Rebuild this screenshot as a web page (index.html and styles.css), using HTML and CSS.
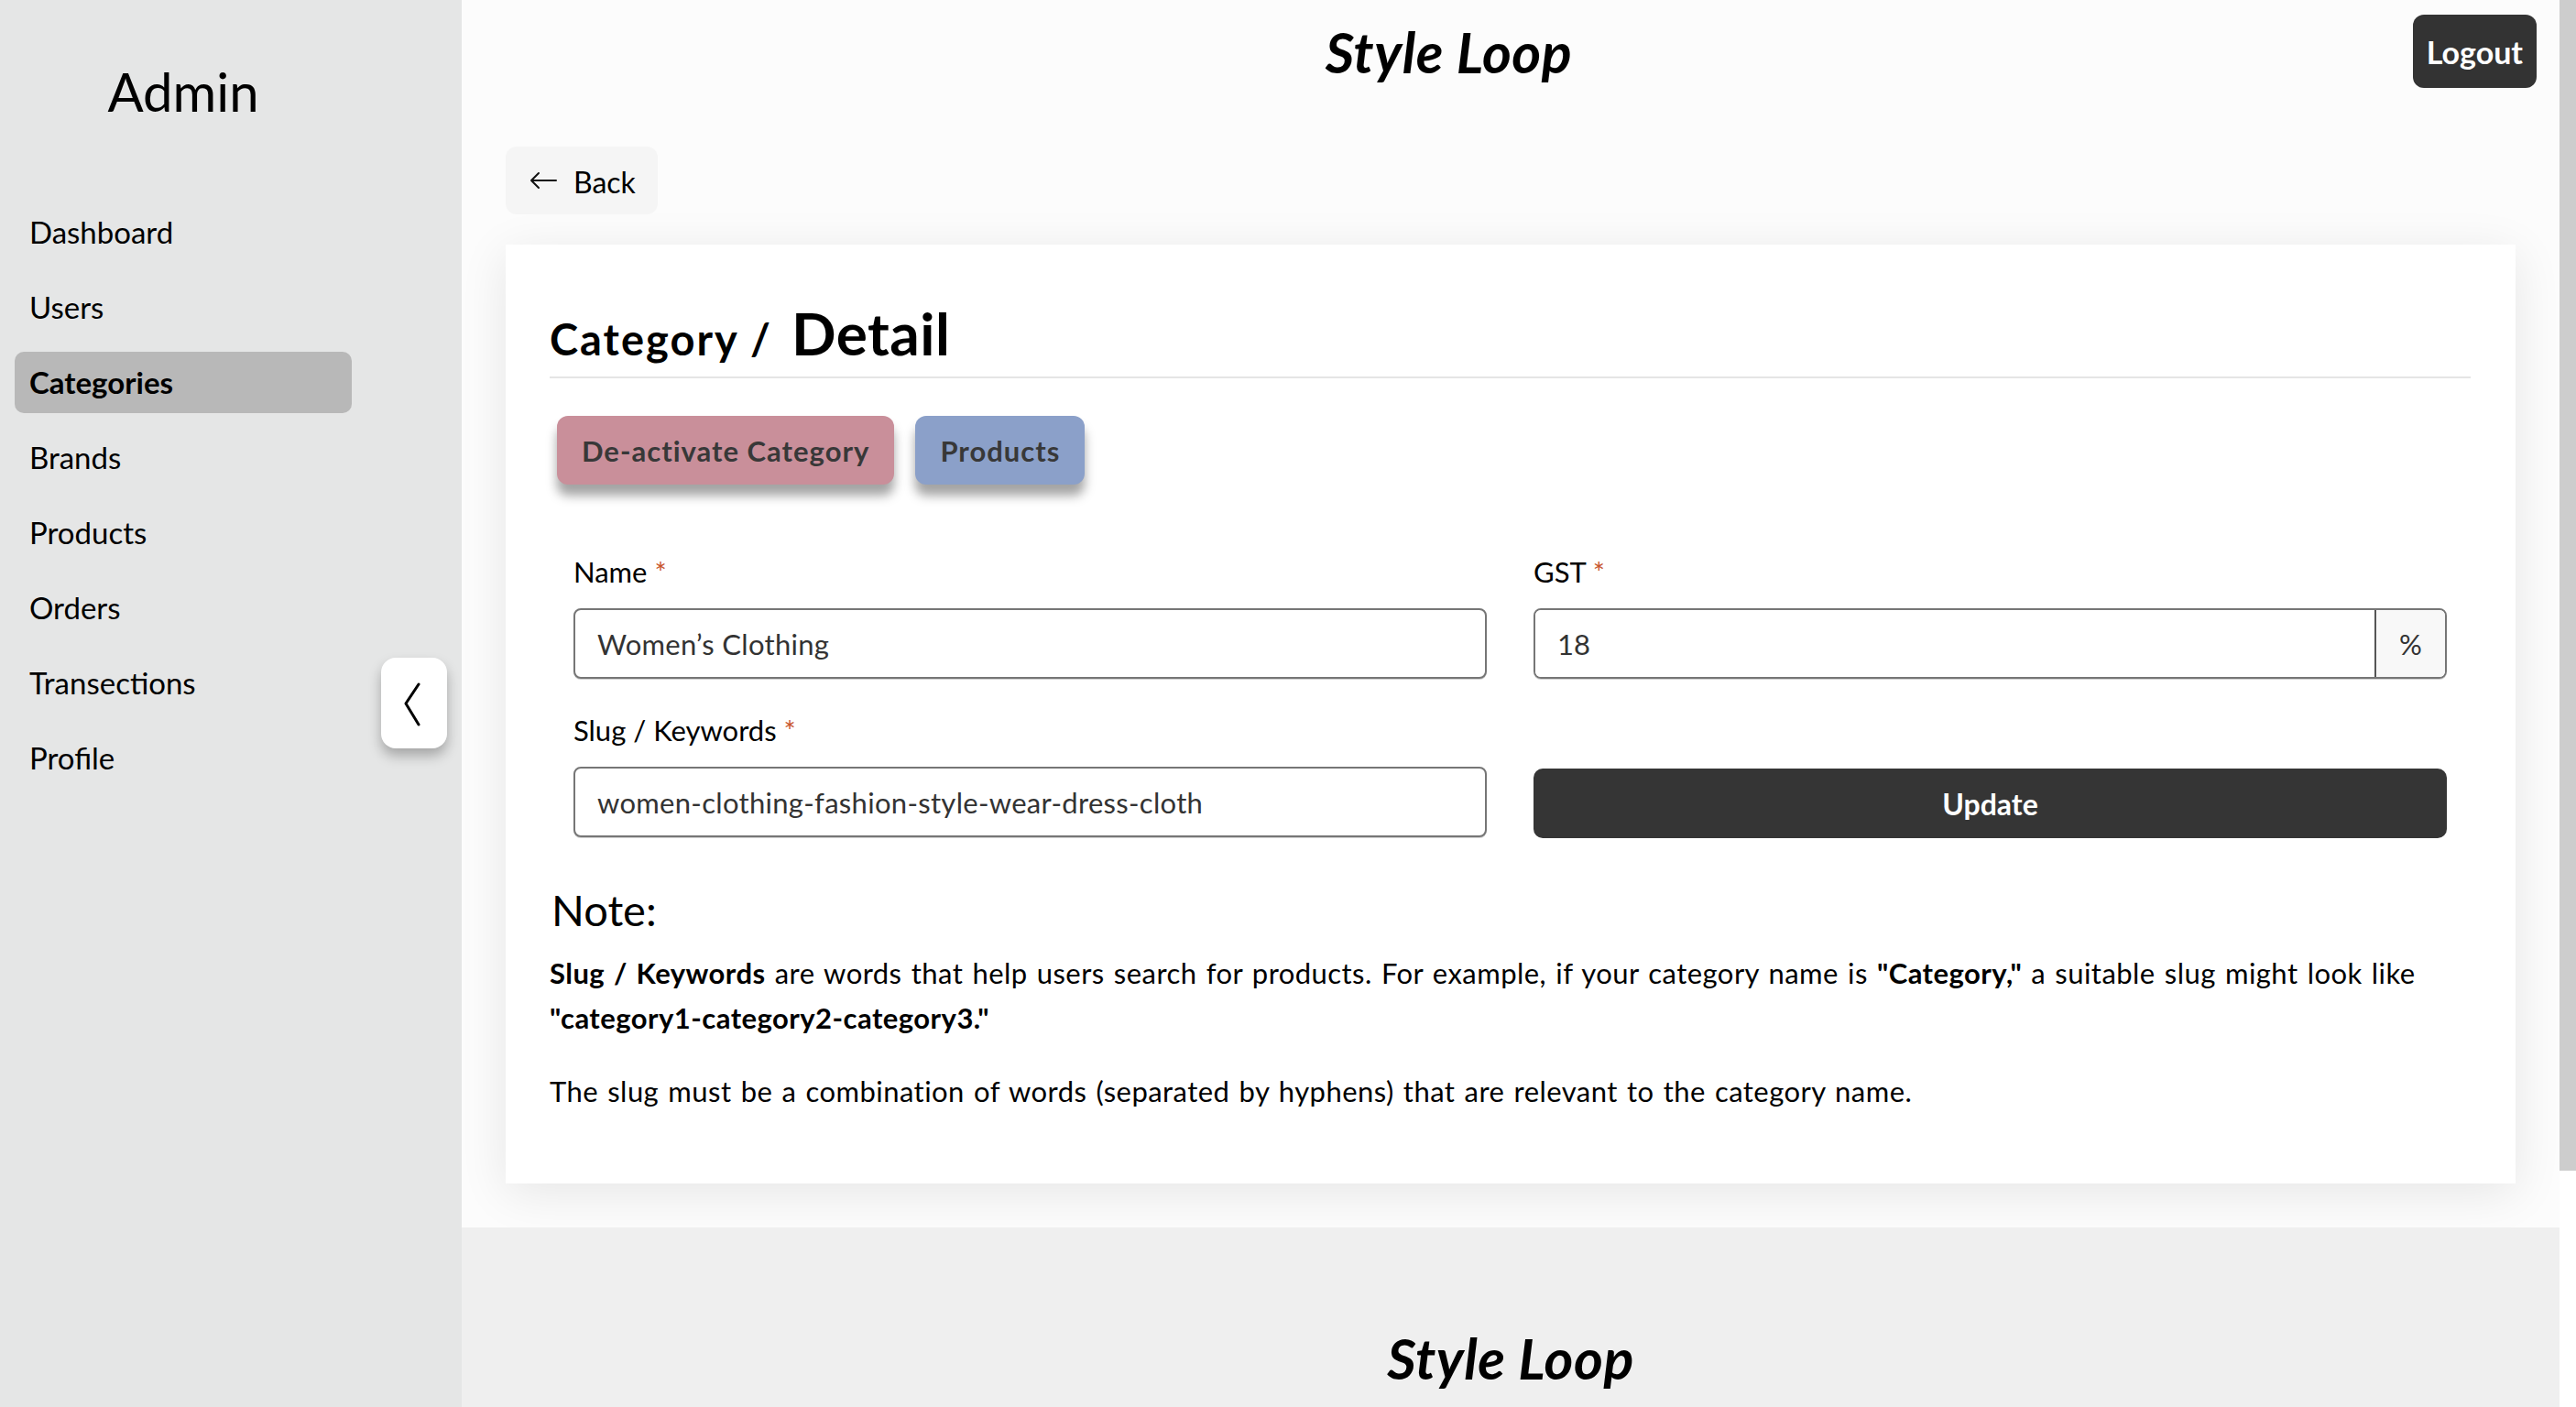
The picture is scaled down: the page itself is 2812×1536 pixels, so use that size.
FILE: index.html
```html
<!DOCTYPE html>
<html lang="en">
<head>
<meta charset="utf-8">
<title>Style Loop – Category Detail</title>
<link rel="stylesheet" href="styles.css">
</head>
<body>
<div class="app">
  <aside class="sidebar">
    <h2 class="brand">Admin</h2>
    <nav class="nav">
      <a class="nav-item">Dashboard</a>
      <a class="nav-item">Users</a>
      <a class="nav-item active">Categories</a>
      <a class="nav-item">Brands</a>
      <a class="nav-item">Products</a>
      <a class="nav-item">Orders</a>
      <a class="nav-item">Transections</a>
      <a class="nav-item">Profile</a>
    </nav>
    <button class="collapse-btn" aria-label="Collapse sidebar">
      <svg width="72" height="99" viewBox="0 0 72 99"><polyline points="41,29 27,50 41,73" fill="none" stroke="#000" stroke-width="3" stroke-linecap="round" stroke-linejoin="round"/></svg>
    </button>
  </aside>
  <div class="main">
    <header class="topbar">
      <div class="logo">Style Loop</div>
      <button class="logout">Logout</button>
    </header>
    <section class="content">
      <button class="back-btn">
        <svg width="30" height="20" viewBox="0 0 30 20"><path d="M29 10H2M10 2L2 10L10 18" fill="none" stroke="#111" stroke-width="2" stroke-linecap="round" stroke-linejoin="round"/></svg>
        <span>Back</span>
      </button>
      <div class="card">
        <h1 class="page-title"><span class="crumb">Category /</span><span class="current">Detail</span></h1>
        <div class="actions">
          <button class="pill pill-deactivate">De-activate Category</button>
          <button class="pill pill-products">Products</button>
        </div>
        <form class="form-grid">
          <div class="field">
            <label>Name <span class="req">*</span></label>
            <input class="text-input" type="text" value="Women’s Clothing">
          </div>
          <div class="field">
            <label>GST <span class="req">*</span></label>
            <div class="input-group">
              <input class="group-input" type="text" value="18">
              <span class="addon">%</span>
            </div>
          </div>
          <div class="field">
            <label>Slug / Keywords <span class="req">*</span></label>
            <input class="text-input" type="text" value="women-clothing-fashion-style-wear-dress-cloth">
          </div>
          <div class="field">
            <button type="button" class="update-btn">Update</button>
          </div>
        </form>
        <div class="note">
          <h3 class="note-title">Note:</h3>
          <p class="note-text"><strong>Slug / Keywords</strong> are words that help users search for products. For example, if your category name is <strong>"Category,"</strong> a suitable slug might look like <strong class="nowrap">"category1-category2-category3."</strong></p>
          <p class="note-text second">The slug must be a combination of words (separated by hyphens) that are relevant to the category name.</p>
        </div>
      </div>
    </section>
    <footer class="footer">
      <div class="logo">Style Loop</div>
    </footer>
  </div>
  <div class="scrollbar"><div class="thumb"></div></div>
</div>
</body>
</html>
```

FILE: styles.css
```css
html, body {
  margin: 0;
  height: 100%;
  overflow: hidden;
}

body {
  font-family: Lato, "Noto Sans", sans-serif;
  color: #000;
}

.app {
  display: flex;
  height: 100vh;
}

/* Sidebar */
.sidebar {
  position: relative;
  flex: none;
  width: 504px;
  box-sizing: border-box;
  padding: 65px 0 0 16px;
  background: #e5e6e6;
}

.brand {
  width: 368px;
  margin: 0;
  font-size: 58px;
  font-weight: 400;
  line-height: 70px;
  text-align: center;
}

.nav {
  width: 368px;
  margin-top: 85px;
  display: flex;
  flex-direction: column;
  gap: 15px;
}

.nav-item {
  display: block;
  height: 67px;
  line-height: 67px;
  padding-left: 16px;
  font-size: 33px;
  border-radius: 10px;
  color: #000;
}

.nav-item.active {
  background: #b8b8b8;
  font-weight: 700;
}

.collapse-btn {
  position: absolute;
  left: 416px;
  top: 718px;
  width: 72px;
  height: 99px;
  padding: 0;
  border: 0;
  border-radius: 16px;
  background: #fff;
  box-shadow: 0 8px 14px rgba(0, 0, 0, 0.28);
  display: flex;
}

/* Main */
.main {
  flex: 1;
  min-width: 0;
  display: flex;
  flex-direction: column;
  background: #fcfcfc;
  overflow: hidden;
}

.topbar {
  display: flex;
  align-items: flex-start;
  padding: 16px 25px;
}

.logo {
  flex: 1;
  text-align: center;
  font-size: 61px;
  font-weight: 700;
  font-style: italic;
  letter-spacing: 0.5px;
  line-height: 82px;
}

.logout {
  height: 80px;
  padding: 0 15px;
  border: 0;
  border-radius: 12px;
  background: #333;
  color: #fff;
  font-family: Lato, "Noto Sans", sans-serif;
  font-size: 34px;
  font-weight: 700;
}

.content {
  padding: 46px 48px 48px;
}

.back-btn {
  display: inline-flex;
  align-items: center;
  gap: 18px;
  height: 74px;
  padding: 0 24px 0 26px;
  border: 0;
  border-radius: 12px;
  background: #f5f5f5;
  font-family: Lato, "Noto Sans", sans-serif;
  font-size: 32px;
  color: #000;
}

.back-btn span {
  padding-top: 3px;
}

.card {
  margin-top: 33px;
  padding: 58px 49px 48px 48px;
  background: #fff;
  box-shadow: 0 10px 50px rgba(0, 0, 0, 0.09);
}

.page-title {
  margin: 0;
  padding-bottom: 2px;
  border-bottom: 2px solid #e5e5e5;
  font-size: 64px;
  font-weight: 700;
  letter-spacing: 0.5px;
  line-height: 77px;
}

.crumb {
  font-size: 47px;
  letter-spacing: 2px;
  margin-right: 21px;
}

.actions {
  display: flex;
  gap: 23px;
  margin-top: 41px;
  padding-left: 8px;
}

.pill {
  height: 75px;
  padding: 0 27px;
  border: 0;
  border-radius: 12px;
  font-family: Lato, "Noto Sans", sans-serif;
  font-size: 31px;
  font-weight: 700;
  letter-spacing: 1px;
  color: #383838;
  box-shadow: 0 12px 12px rgba(0, 0, 0, 0.36);
}

.pill-deactivate {
  background: #c98f9a;
}

.pill-products {
  background: #8ba0c9;
}

/* Form */
.form-grid {
  display: grid;
  grid-template-columns: 1fr 1fr;
  column-gap: 51px;
  row-gap: 36px;
  align-items: end;
  margin: 75px 26px 0;
}

.field label {
  display: block;
  margin-bottom: 20px;
  font-size: 31px;
  line-height: 40px;
}

.req {
  color: #c8552c;
}

.text-input {
  display: block;
  box-sizing: border-box;
  width: 100%;
  height: 77px;
  padding: 0 24px;
  border: 2px solid #767676;
  border-radius: 8px;
  box-shadow: 0 1px 0 rgba(0, 0, 0, 0.18);
  font-family: Lato, "Noto Sans", sans-serif;
  font-size: 31px;
  letter-spacing: 0.3px;
  color: #333;
  outline: none;
}

.input-group {
  display: flex;
  box-sizing: border-box;
  height: 77px;
  border: 2px solid #767676;
  border-radius: 8px;
  box-shadow: 0 1px 0 rgba(0, 0, 0, 0.18);
  overflow: hidden;
}

.group-input {
  flex: 1;
  min-width: 0;
  padding: 0 24px;
  border: 0;
  font-family: Lato, "Noto Sans", sans-serif;
  font-size: 31px;
  color: #333;
  outline: none;
}

.addon {
  width: 75px;
  display: flex;
  align-items: center;
  justify-content: center;
  border-left: 2px solid #555;
  background: #f8f8f8;
  font-size: 31px;
  color: #333;
}

.update-btn {
  display: block;
  width: 100%;
  height: 76px;
  margin-bottom: -1px;
  border: 0;
  border-radius: 10px;
  background: #353535;
  color: #fff;
  font-family: Lato, "Noto Sans", sans-serif;
  font-size: 32px;
  font-weight: 700;
}

/* Note */
.note-title {
  margin: 52px 0 0 2px;
  font-size: 47px;
  font-weight: 400;
  line-height: 55px;
}

.note-text {
  margin: 17px 0 0;
  font-size: 31px;
  letter-spacing: 0.45px;
  word-spacing: 1.8px;
  line-height: 49px;
}

.note-text.second {
  margin: 31px 0 28px;
}

.nowrap {
  white-space: nowrap;
}

/* Footer */
.footer {
  flex: 1;
  padding-top: 102px;
  background: #efefef;
}

/* Scrollbar */
.scrollbar {
  flex: none;
  width: 18px;
  background: #fff;
}

.thumb {
  height: 1278px;
  background: #cdcdcd;
}
```
